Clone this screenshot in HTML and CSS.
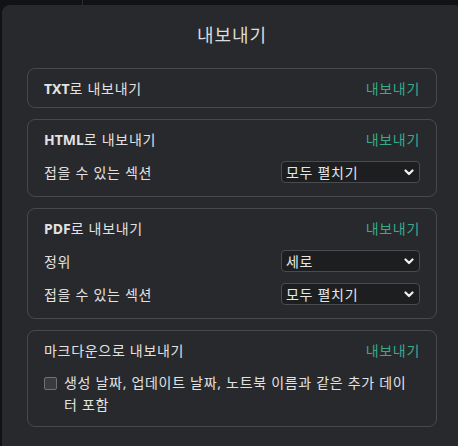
FILE: index.html
```html
<!DOCTYPE html>
<html lang="ko">
<head>
    <meta charset="UTF-8">
    <meta name="viewport" content="width=device-width, initial-scale=1.0">
    <title>내보내기</title>
    <link rel="stylesheet" href="styles.css">
</head>
<body>
    <div class="dialog">
        <h2 class="dialog-title">내보내기</h2>

        <div class="export-list">
            <!-- TXT -->
            <div class="export-card">
                <div class="export-head">
                    <span class="export-name"><b>TXT</b>로 내보내기</span>
                    <a class="export-link" href="#">내보내기</a>
                </div>
            </div>

            <!-- HTML -->
            <div class="export-card">
                <div class="export-head">
                    <span class="export-name"><b>HTML</b>로 내보내기</span>
                    <a class="export-link" href="#">내보내기</a>
                </div>
                <div class="option-list">
                    <div class="option-row">
                        <label>접을 수 있는 섹션</label>
                        <div class="select-wrap">
                            <select>
                                <option>모두 펼치기</option>
                                <option>모두 접기</option>
                            </select>
                            <svg class="chevron" width="10" height="7" viewBox="0 0 10 7"><path d="M1.5 1.5 5 5 8.5 1.5" fill="none" stroke="#f0f0f0" stroke-width="2.2" stroke-linecap="round" stroke-linejoin="round"/></svg>
                        </div>
                    </div>
                </div>
            </div>

            <!-- PDF -->
            <div class="export-card">
                <div class="export-head">
                    <span class="export-name"><b>PDF</b>로 내보내기</span>
                    <a class="export-link" href="#">내보내기</a>
                </div>
                <div class="option-list">
                    <div class="option-row">
                        <label>정위</label>
                        <div class="select-wrap">
                            <select>
                                <option>세로</option>
                                <option>가로</option>
                            </select>
                            <svg class="chevron" width="10" height="7" viewBox="0 0 10 7"><path d="M1.5 1.5 5 5 8.5 1.5" fill="none" stroke="#f0f0f0" stroke-width="2.2" stroke-linecap="round" stroke-linejoin="round"/></svg>
                        </div>
                    </div>
                    <div class="option-row">
                        <label>접을 수 있는 섹션</label>
                        <div class="select-wrap">
                            <select>
                                <option>모두 펼치기</option>
                                <option>모두 접기</option>
                            </select>
                            <svg class="chevron" width="10" height="7" viewBox="0 0 10 7"><path d="M1.5 1.5 5 5 8.5 1.5" fill="none" stroke="#f0f0f0" stroke-width="2.2" stroke-linecap="round" stroke-linejoin="round"/></svg>
                        </div>
                    </div>
                </div>
            </div>

            <!-- Markdown -->
            <div class="export-card">
                <div class="export-head">
                    <span class="export-name">마크다운으로 내보내기</span>
                    <a class="export-link" href="#">내보내기</a>
                </div>
                <label class="check-row">
                    <input type="checkbox">
                    <span>생성 날짜, 업데이트 날짜, 노트북 이름과 같은 추가 데이터 포함</span>
                </label>
            </div>
        </div>
    </div>
</body>
</html>
```

FILE: styles.css
```css
* {
    margin: 0;
    padding: 0;
    box-sizing: border-box;
    font-family: 'Noto Sans', 'Noto Sans CJK KR', sans-serif;
}

body {
    height: 100vh;
    overflow: hidden;
    background: #111214 linear-gradient(to right, transparent 82px, #2b2c2f 82px, #2b2c2f 83px, transparent 83px);
    padding: 5px 0 0 2px;
    color: #e2e2e2;
    letter-spacing: 0.7px;
}

.dialog {
    width: 460px;
    height: 460px;
    background: #28292c;
    border-radius: 8px;
    padding: 18px 25px 0;
}

.dialog-title {
    font-size: 18px;
    font-weight: 400;
    line-height: 24px;
    letter-spacing: 1px;
    text-align: center;
    color: #dcdcdc;
    margin-bottom: 21px;
}

.export-list {
    display: flex;
    flex-direction: column;
    gap: 11px;
}

.export-card {
    border: 1px solid #48494c;
    border-radius: 8px;
    padding: 10px 16px;
    display: flex;
    flex-direction: column;
    gap: 10px;
}

.export-head {
    display: flex;
    justify-content: space-between;
    align-items: center;
    height: 18px;
    font-size: 14px;
}

.export-name { color: #e2e2e2; }
.export-name b { font-weight: 700; letter-spacing: 0; }

.export-link {
    color: #35ab8b;
    text-decoration: none;
}

.option-list {
    display: flex;
    flex-direction: column;
    gap: 5px;
}

.option-row {
    display: flex;
    justify-content: space-between;
    align-items: center;
    height: 28px;
    font-size: 14px;
}

.select-wrap {
    position: relative;
    width: 139px;
}

.select-wrap select {
    appearance: none;
    width: 100%;
    height: 22px;
    background: #1d1e20;
    border: 1px solid #4a4b4e;
    border-radius: 4px;
    color: #e6e6e6;
    font-size: 14px;
    letter-spacing: 0.7px;
    padding: 0 4px;
    outline: none;
}

.chevron {
    position: absolute;
    right: 6px;
    top: 8px;
    pointer-events: none;
}

.check-row {
    display: flex;
    align-items: flex-start;
    gap: 7px;
    font-size: 14px;
    line-height: 22px;
    margin-top: 3px;
    padding-right: 10px;
}

.check-row input {
    appearance: none;
    flex: none;
    width: 13px;
    height: 13px;
    margin-top: 5px;
    background: #3a3b3d;
    border: 1px solid #707174;
    border-radius: 2px;
}
```
